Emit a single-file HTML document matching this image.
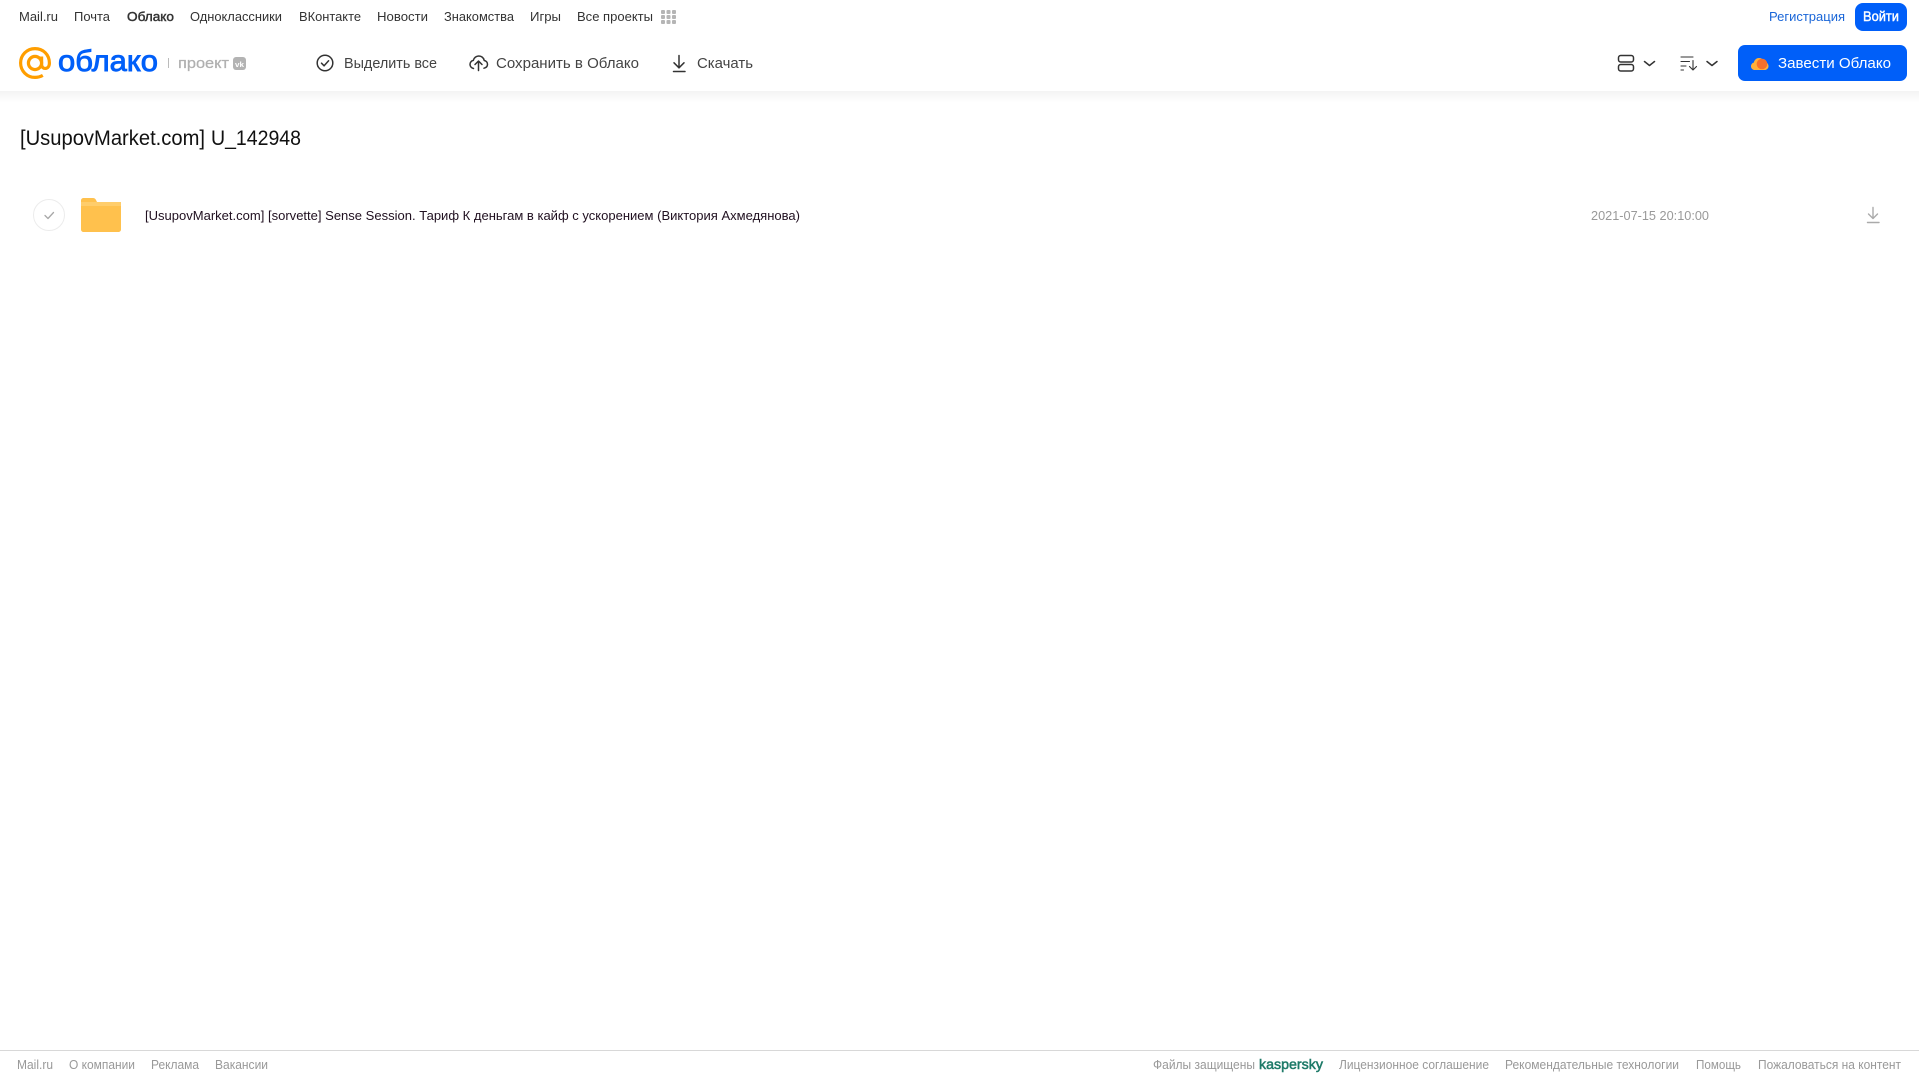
<!DOCTYPE html>
<html lang="ru">
<head>
<meta charset="utf-8">
<title>Облако</title>
<style>
html,body{margin:0;padding:0;background:#fff;width:1919px;height:1079px;overflow:hidden}
svg{display:block;position:absolute;left:0;top:0}
text{font-family:"Liberation Sans",Arial,sans-serif}
.n{font-size:13px;fill:#333}
.t{font-size:15px;fill:#444}
.f{font-size:12.5px;fill:#999}
</style>
</head>
<body>
<svg width="1919" height="1079" viewBox="0 0 1919 1079" xmlns="http://www.w3.org/2000/svg">
<defs>
<linearGradient id="sh" x1="0" y1="0" x2="0" y2="1"><stop offset="0" stop-color="#f3f3f3"/><stop offset="1" stop-color="#fff"/></linearGradient>
</defs>
<rect width="1919" height="1079" fill="#fff"/>
<rect x="0" y="91" width="1919" height="12" fill="url(#sh)"/>

<!-- top nav -->
<text class="n" x="19" y="21" textLength="39" lengthAdjust="spacingAndGlyphs">Mail.ru</text>
<text class="n" x="74" y="21" textLength="36" lengthAdjust="spacingAndGlyphs">Почта</text>
<text class="n" x="127" y="21" textLength="47" lengthAdjust="spacingAndGlyphs" stroke="#333" stroke-width=".45">Облако</text>
<text class="n" x="190" y="21" textLength="92" lengthAdjust="spacingAndGlyphs">Одноклассники</text>
<text class="n" x="299" y="21" textLength="62" lengthAdjust="spacingAndGlyphs">ВКонтакте</text>
<text class="n" x="377" y="21" textLength="51" lengthAdjust="spacingAndGlyphs">Новости</text>
<text class="n" x="444" y="21" textLength="70" lengthAdjust="spacingAndGlyphs">Знакомства</text>
<text class="n" x="530" y="21" textLength="31" lengthAdjust="spacingAndGlyphs">Игры</text>
<text class="n" x="577" y="21" textLength="76" lengthAdjust="spacingAndGlyphs">Все проекты</text>
<g fill="#b5b5b5">
<rect x="661" y="10" width="4" height="4" rx="1"/><rect x="666.500" y="10" width="4" height="4" rx="1"/><rect x="672" y="10" width="4" height="4" rx="1"/>
<rect x="661" y="15" width="4" height="4" rx="1"/><rect x="666.500" y="15" width="4" height="4" rx="1"/><rect x="672" y="15" width="4" height="4" rx="1"/>
<rect x="661" y="20" width="4" height="4" rx="1"/><rect x="666.500" y="20" width="4" height="4" rx="1"/><rect x="672" y="20" width="4" height="4" rx="1"/>
</g>
<text x="1769" y="21" font-size="13" fill="#1a66d8" textLength="76" lengthAdjust="spacingAndGlyphs">Регистрация</text>
<rect x="1855" y="3" width="52" height="28" rx="8" fill="#005ff9"/>
<text x="1863" y="21" font-size="13.500" fill="#fff" stroke="#fff" stroke-width=".4" textLength="36" lengthAdjust="spacingAndGlyphs">Войти</text>

<!-- logo -->
<g fill="none" stroke="#ff9e00" stroke-width="3.200">
<circle cx="35" cy="63" r="6.600"/>
<path d="M41.600 56.500v8c0 5.500 7.800 5.500 7.800-1.500 0-8.500-6.400-14.400-14.400-14.400S20.600 55 20.600 63 27 77.400 35 77.400c3 0 5.500-.7 7.800-2"/>
</g>
<text x="58" y="71" font-size="30" fill="#005ff9" stroke="#005ff9" stroke-width=".9" textLength="100" lengthAdjust="spacingAndGlyphs">облако</text>
<rect x="168" y="58" width="1" height="10" fill="#bbb"/>
<text x="178" y="68" font-size="15" fill="#b0b0b0" stroke="#b0b0b0" stroke-width=".25" textLength="51" lengthAdjust="spacingAndGlyphs">проект</text>
<rect x="233" y="57" width="13" height="13" rx="3" fill="#b3b3b3"/>
<text x="235" y="67" font-size="7.500" font-weight="700" fill="#fff" textLength="9" lengthAdjust="spacingAndGlyphs">vk</text>

<!-- toolbar -->
<g fill="none" stroke="#333" stroke-width="1.500" stroke-linecap="round" stroke-linejoin="round">
<circle cx="325" cy="63" r="7.800"/>
<path d="M321.500 63.200l2.600 2.600 4.500-5"/>
<path d="M473.500 68.500c-2.300-.5-3.500-2.300-3.500-4.200 0-2 1.500-3.600 3.300-3.900.7-2.800 3.100-4.400 5.500-4.400 2.700 0 5 1.800 5.400 4.500 1.900.3 3.300 1.800 3.300 3.800 0 2-1.300 3.400-3.500 3.900"/>
<path d="M478.500 70.500v-9M475 64.500l3.500-3.500 3.500 3.500"/>
<path d="M679 55.500v12M674 62.800l5 5 5-5"/>
<path d="M673.500 71.500h11.500"/>
<rect x="1618.500" y="55.500" width="15" height="6.500" rx="2.200"/>
<rect x="1618.500" y="64.500" width="15" height="6.500" rx="2.200"/>
<path d="M1644.500 61.500l5 4 5-4"/>
<path d="M1707 61.500l5 4 5-4"/>
</g>
<g fill="none" stroke="#333" stroke-width="1.100" stroke-linecap="round" stroke-linejoin="round">
<path d="M1681 57h12M1681 61.500h8.500M1681 66h5M1681 70h2.500"/>
<path d="M1693 60.500v9.500M1689.500 66.500l3.500 3.500 3.500-3.500"/>
</g>
<text class="t" x="344" y="68" textLength="93" lengthAdjust="spacingAndGlyphs">Выделить все</text>
<text class="t" x="496" y="68" textLength="143" lengthAdjust="spacingAndGlyphs">Сохранить в Облако</text>
<text class="t" x="697" y="68" textLength="56" lengthAdjust="spacingAndGlyphs">Скачать</text>

<!-- CTA -->
<rect x="1738" y="45" width="169" height="36" rx="7" fill="#005ff9"/>
<path d="M1755 70c-2.500 0-4-1.800-4-3.800 0-1.900 1.300-3.300 2.800-3.600.7-3 2.900-4.600 5.200-4.600 2.500 0 4.600 1.600 5.200 3.800 2.500.2 4.300 2.100 4.300 4.300 0 2.300-1.800 3.900-4 3.900z" fill="#ffb03a"/>
<circle cx="1762" cy="64" r="5.300" fill="#f7702b"/>
<text x="1778" y="68" font-size="15" fill="#fff" textLength="113" lengthAdjust="spacingAndGlyphs">Завести Облако</text>

<!-- title -->
<text x="20" y="145" font-size="21" fill="#111" textLength="185" lengthAdjust="spacingAndGlyphs">[UsupovMarket.com]</text>
<text x="211" y="145" font-size="21" fill="#111" textLength="90" lengthAdjust="spacingAndGlyphs">U_142948</text>

<!-- row -->
<circle cx="49" cy="215" r="15.500" fill="#fff" stroke="#ececec" stroke-width="1"/>
<path d="M45 215.500l3 3 5.500-6" fill="none" stroke="#a8a8a8" stroke-width="1.300" stroke-linecap="round" stroke-linejoin="round"/>
<path d="M81 200.500c0-1.400 1.100-2.500 2.500-2.500h9.500c1.400 0 2.400.8 3 2l1 2h21.500c1.400 0 2.500 1.100 2.500 2.500v25c0 1.400-1.100 2.500-2.500 2.500h-35c-1.400 0-2.500-1.100-2.500-2.500z" fill="#ffc14d"/>
<rect x="81" y="202" width="40" height="4" fill="#ffcd6b"/>
<text x="145" y="220" font-size="13" fill="#201020" textLength="655" lengthAdjust="spacingAndGlyphs">[UsupovMarket.com] [sorvette] Sense Session. Тариф К деньгам в кайф с ускорением (Виктория Ахмедянова)</text>
<text x="1591" y="220" font-size="13" fill="#999" textLength="118" lengthAdjust="spacingAndGlyphs">2021-07-15 20:10:00</text>
<g fill="none" stroke="#aaa" stroke-width="1.400" stroke-linecap="round" stroke-linejoin="round">
<path d="M1873 207.500v11M1868.500 214l4.500 4.500 4.500-4.500"/>
<path d="M1867.500 222.500h11.500"/>
</g>

<!-- footer -->
<rect x="0" y="1050" width="1919" height="1" fill="#d8d8d8"/>
<text class="f" x="17" y="1069" textLength="36" lengthAdjust="spacingAndGlyphs">Mail.ru</text>
<text class="f" x="69" y="1069" textLength="66" lengthAdjust="spacingAndGlyphs">О компании</text>
<text class="f" x="151" y="1069" textLength="48" lengthAdjust="spacingAndGlyphs">Реклама</text>
<text class="f" x="215" y="1069" textLength="53" lengthAdjust="spacingAndGlyphs">Вакансии</text>
<text class="f" x="1153" y="1069" textLength="102" lengthAdjust="spacingAndGlyphs">Файлы защищены</text>
<text x="1259" y="1069" font-size="13.500" fill="#1d7a68" stroke="#1d7a68" stroke-width=".5" textLength="64" lengthAdjust="spacingAndGlyphs">kaspersky</text>
<text class="f" x="1339" y="1069" textLength="150" lengthAdjust="spacingAndGlyphs">Лицензионное соглашение</text>
<text class="f" x="1505" y="1069" textLength="174" lengthAdjust="spacingAndGlyphs">Рекомендательные технологии</text>
<text class="f" x="1696" y="1069" textLength="45" lengthAdjust="spacingAndGlyphs">Помощь</text>
<text class="f" x="1758" y="1069" textLength="143" lengthAdjust="spacingAndGlyphs">Пожаловаться на контент</text>
</svg>
</body>
</html>
